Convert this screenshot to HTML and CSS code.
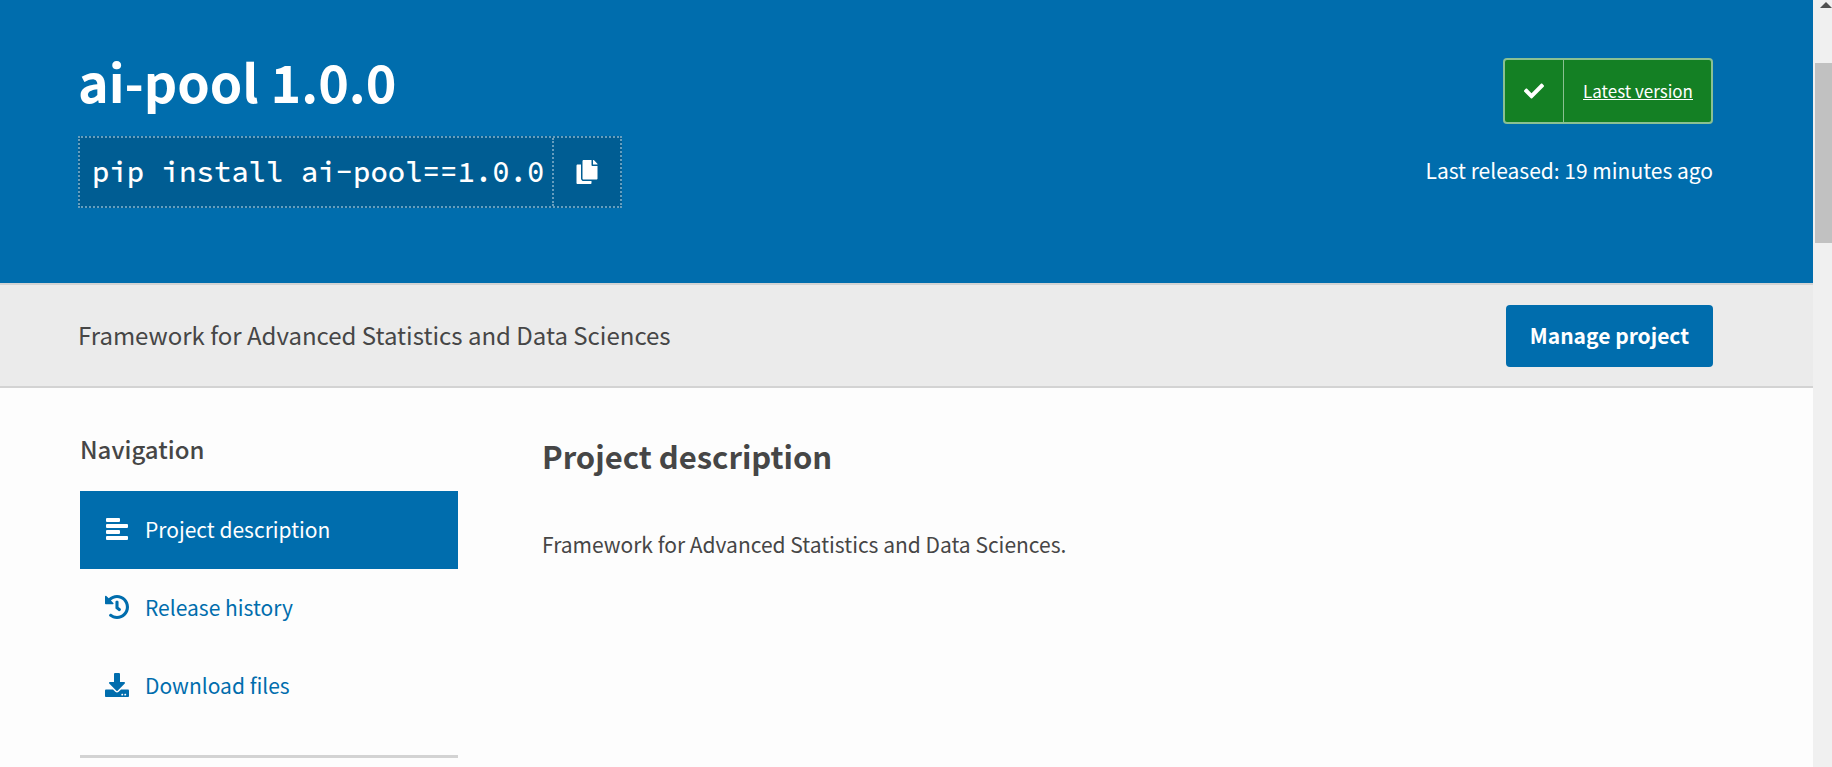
FILE: index.html
```html
<!DOCTYPE html>
<html lang="en">
<head>
<meta charset="utf-8">
<title>ai-pool 1.0.0</title>
<link rel="stylesheet" href="styles.css">
</head>
<body>
<div class="page">
  <header class="banner">
    <div class="package">
      <h1 class="package-title">ai-pool 1.0.0</h1>
      <div class="pip">
        <code class="pip-command">pip install ai-pool==1.0.0</code>
        <button class="pip-copy" type="button" aria-label="Copy PIP instructions">
          <svg class="copy-icon" viewBox="0 0 448 512" aria-hidden="true"><path d="M320 448v40c0 13.255-10.745 24-24 24H24c-13.255 0-24-10.745-24-24V120c0-13.255 10.745-24 24-24h72v296c0 30.879 25.121 56 56 56h168zm0-344V0H152c-13.255 0-24 10.745-24 24v368c0 13.255 10.745 24 24 24h272c13.255 0 24-10.745 24-24V128H344c-13.2 0-24-10.8-24-24zm120.971-31.029L375.029 7.029A24 24 0 0 0 358.059 0H352v96h96v-6.059a24 24 0 0 0-7.029-16.97z"/></svg>
        </button>
      </div>
    </div>
    <div class="release">
      <a class="status" href="#latest">
        <span class="status-mark"><svg class="check-icon" viewBox="0 0 512 512" aria-hidden="true"><path d="M173.898 439.404l-166.4-166.4c-9.997-9.997-9.997-26.206 0-36.204l36.203-36.204c9.997-9.998 26.207-9.998 36.204 0L192 312.69 432.095 72.596c9.997-9.997 26.207-9.997 36.204 0l36.203 36.204c9.997 9.997 9.997 26.206 0 36.204l-294.4 294.401c-9.998 9.997-26.207 9.997-36.204-.001z"/></svg></span>
        <span class="status-text">Latest version</span>
      </a>
      <p class="release-date">Last released: <time>19 minutes ago</time></p>
    </div>
  </header>

  <section class="summary">
    <p class="summary-text">Framework for Advanced Statistics and Data Sciences</p>
    <a class="manage" href="#manage">Manage project</a>
  </section>

  <div class="content">
    <aside class="sidebar">
      <h3 class="sidebar-title">Navigation</h3>
      <nav class="tabs">
        <a class="tab tab-active" href="#description">
          <svg class="tab-icon" viewBox="0 0 24 24" aria-hidden="true"><path d="M2 1h12q1 0 1 1v2q0 1-1 1H2q-1 0-1-1V2q0-1 1-1zM2 7h20q1 0 1 1v2q0 1-1 1H2q-1 0-1-1V8q0-1 1-1zM2 13h12q1 0 1 1v2q0 1-1 1H2q-1 0-1-1v-2q0-1 1-1zM2 19h20q1 0 1 1v2q0 1-1 1H2q-1 0-1-1v-2q0-1 1-1z"/></svg>
          Project description</a>
        <a class="tab" href="#history">
          <svg class="tab-icon" viewBox="8 8 496 496" aria-hidden="true"><path d="M504 255.531c.253 136.64-111.18 248.372-247.82 248.468-59.015.042-113.223-20.53-155.822-54.911-11.077-8.94-11.905-25.541-1.839-35.607l11.267-11.267c8.609-8.609 22.353-9.551 31.891-1.984C173.062 425.135 212.781 440 256 440c101.705 0 184-82.311 184-184 0-101.705-82.311-184-184-184-48.814 0-93.149 18.969-126.068 49.932l50.754 50.754c10.08 10.08 2.941 27.314-11.313 27.314H24c-8.837 0-16-7.163-16-16V38.627c0-14.254 17.234-21.393 27.314-11.314l49.372 49.372C129.209 34.136 189.552 8 256 8c136.81 0 247.747 110.78 248 247.531zm-180.912 78.784l9.823-12.63c8.138-10.463 6.253-25.542-4.21-33.679L288 256.349V152c0-13.255-10.745-24-24-24h-16c-13.255 0-24 10.745-24 24v135.651l65.409 50.874c10.463 8.137 25.541 6.253 33.679-4.21z"/></svg>
          Release history</a>
        <a class="tab" href="#files">
          <svg class="tab-icon" viewBox="0 0 512 512" aria-hidden="true"><path d="M216 0h80c13.3 0 24 10.7 24 24v168h87.7c17.8 0 26.7 21.5 14.1 34.1L269.7 378.3c-7.5 7.5-19.8 7.5-27.3 0L90.1 226.1c-12.6-12.6-3.7-34.1 14.1-34.1H192V24c0-13.3 10.7-24 24-24zm296 376v112c0 13.3-10.7 24-24 24H24c-13.3 0-24-10.7-24-24V376c0-13.3 10.7-24 24-24h146.7l49 49c20.1 20.1 52.5 20.1 72.6 0l49-49H488c13.3 0 24 10.7 24 24zm-124 88c0-11-9-20-20-20s-20 9-20 20 9 20 20 20 20-9 20-20zm64 0c0-11-9-20-20-20s-20 9-20 20 9 20 20 20 20-9 20-20z"/></svg>
          Download files</a>
      </nav>
    </aside>
    <main class="description">
      <h2 class="description-title">Project description</h2>
      <p class="description-text">Framework for Advanced Statistics and Data Sciences.</p>
    </main>
  </div>
</div>
<div class="scrollbar" aria-hidden="true">
  <svg class="scroll-arrow" viewBox="0 0 12 6"><path d="M6 0l6 6H0z"/></svg>
  <div class="scroll-thumb"></div>
</div>
</body>
</html>
```
FILE: styles.css
```css
* {
  box-sizing: border-box;
}

body {
  margin: 0;
  display: grid;
  grid-template-columns: 1fr 19px;
  height: 100vh;
  overflow: hidden;
  background: #fdfdfd;
  color: #464646;
  font-family: "Source Sans Pro", "Noto Sans CJK SC", "Noto Sans", sans-serif;
  font-size: 21px;
  line-height: 32px;
}

h1, h2, h3, p {
  margin: 0;
}

svg {
  display: block;
  fill: currentColor;
}

.banner {
  display: flex;
  justify-content: space-between;
  align-items: flex-start;
  padding: 51px 100px 75px 78px;
  background: #006dad;
  color: #fff;
}

.package-title {
  font-size: 52px;
  font-weight: 700;
  line-height: 60px;
  margin-bottom: 25px;
}

.pip {
  display: flex;
  height: 72px;
  border: 2px dotted rgba(255, 255, 255, 0.4);
  background: #005d93;
}

.pip-command {
  padding: 0 8px 0 12px;
  font-family: "Source Code Pro", "Noto Sans Mono CJK SC", "DejaVu Sans Mono", monospace;
  font-size: 29px;
  font-weight: 500;
  line-height: 68px;
  white-space: pre;
}

.pip-copy {
  display: grid;
  place-items: center;
  width: 68px;
  padding: 0;
  border: 0;
  border-left: 2px dotted rgba(255, 255, 255, 0.4);
  background: none;
  color: inherit;
}

.copy-icon {
  width: 22px;
  height: 24px;
}

.release {
  display: flex;
  flex-direction: column;
  align-items: flex-end;
  gap: 30px;
  padding-top: 7px;
}

.status {
  display: flex;
  height: 66px;
  border: 2px solid rgba(255, 255, 255, 0.5);
  border-radius: 4px;
  background: #148024;
  color: #fff;
  font-size: 17px;
}

.status-mark {
  display: grid;
  place-items: center;
  width: 59px;
  border-right: 1px solid rgba(255, 255, 255, 0.5);
}

.check-icon {
  width: 20px;
  height: 20px;
}

.status-text {
  padding: 0 18px 0 19px;
  line-height: 62px;
}

.summary {
  display: flex;
  justify-content: space-between;
  align-items: center;
  padding: 20px 100px 19px 78px;
  border: solid #d3d3d3;
  border-width: 2px 0;
  background: #ebebeb;
}

.summary-text {
  padding-bottom: 2px;
  font-size: 24px;
}

.manage {
  padding: 14px 24px 16px;
  border-radius: 4px;
  background: #006dad;
  color: #fff;
  font-weight: 700;
  text-decoration: none;
}

.content {
  display: grid;
  grid-template-columns: 378px 1fr;
  align-items: start;
  column-gap: 84px;
  padding: 45px 100px 0 80px;
}

.sidebar {
  padding-bottom: 30px;
  border-bottom: 3px solid #d3d3d3;
}

.sidebar-title {
  margin-bottom: 26px;
  font-size: 24px;
  font-weight: 500;
}

.tab {
  display: flex;
  align-items: center;
  gap: 16px;
  height: 78px;
  padding: 0 25px 2px;
  color: #006dad;
  text-decoration: none;
}

.tab-active {
  background: #006dad;
  color: #fff;
}

.tab-icon {
  width: 24px;
  height: 24px;
}

.description-title {
  margin: 3px 0 52px;
  font-size: 31px;
  font-weight: 700;
  line-height: 40px;
}

.scrollbar {
  padding: 2px 0 0 2px;
  background: #f0f0f0;
}

.scroll-arrow {
  width: 12px;
  height: 6px;
  margin: 0 0 55px 5px;
  color: #505050;
}

.scroll-thumb {
  height: 180px;
  background: #c1c1c1;
}
```
